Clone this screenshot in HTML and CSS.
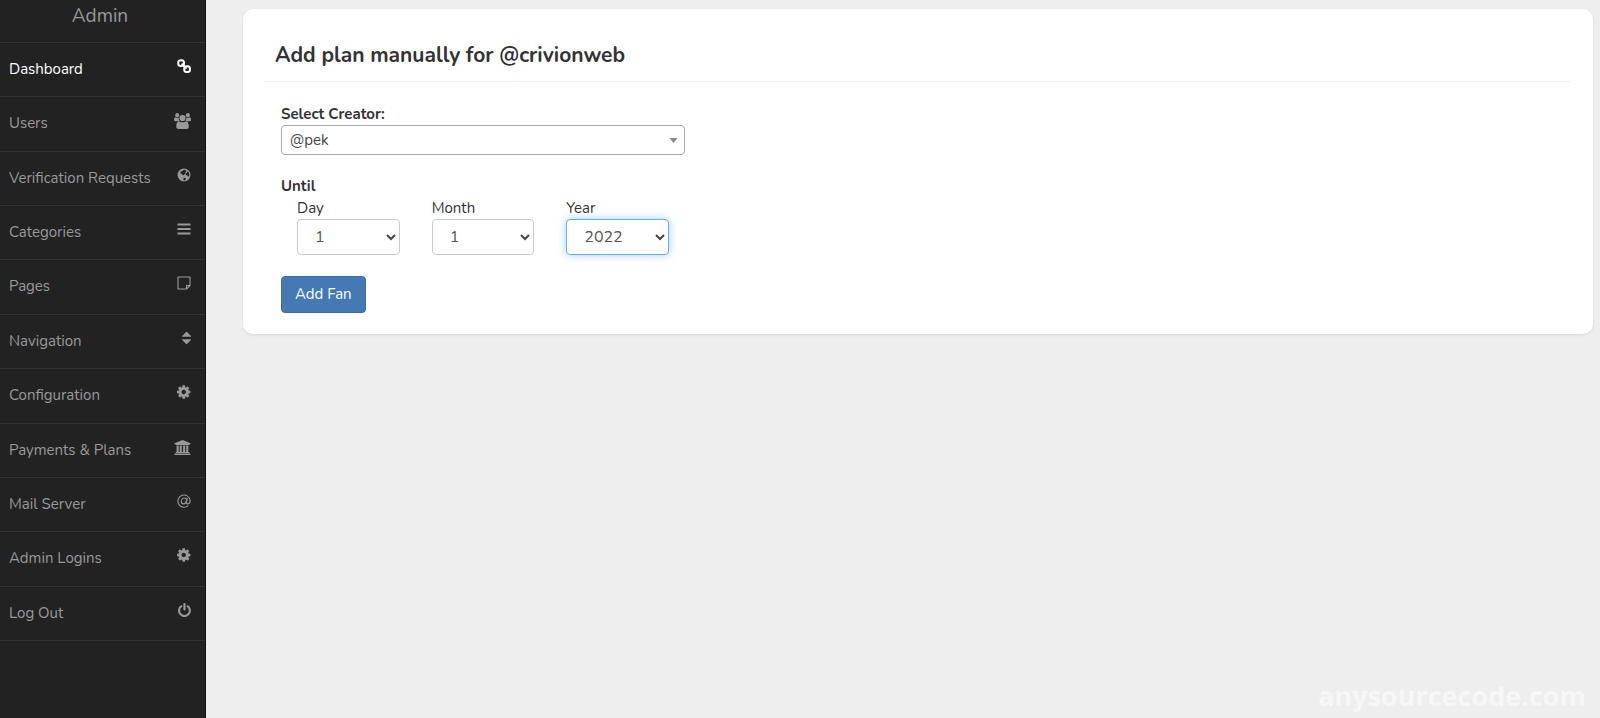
FILE: index.html
```
<!DOCTYPE html>
<html lang="en">
<head>
  <meta charset="UTF-8">
  <meta name="viewport" content="width=device-width, initial-scale=1.0">
  <title>Admin - Add plan manually</title>
  <link rel="stylesheet" href="styles.css">
</head>
<body>
  <div class="wrapper">
    <aside class="sidebar">
      <div class="sidebar-brand">Admin</div>
      <nav class="sidebar-nav">
        <a href="#" class="active">Dashboard
          <svg class="icon" viewBox="0 0 14 14"><g fill="none" stroke="currentColor" stroke-width="2"><rect x="1.200" y="1.200" width="5.800" height="5.800" rx="2.500"/><rect x="7.200" y="7.200" width="5.800" height="5.800" rx="2.500"/><path d="M4.600 4.600l5 5"/></g></svg>
        </a>
        <a href="#">Users
          <svg class="icon icon-wide" viewBox="0 0 16 15"><g fill="currentColor"><circle cx="3" cy="2" r="1.9"/><circle cx="13" cy="2" r="1.9"/><circle cx="8" cy="4.800" r="2.900"/><path d="M0 6.600q0-2.600 1.200-2.600q1.600.9 3.200.3q-.2 1.900 1 3.400h-3.700q-1.700 0-1.700-1.100zM16 6.600q0-2.600-1.200-2.600q-1.600.9-3.200.3q.2 1.900-1 3.400h3.700q1.700 0 1.700-1.100zM2.100 12.800q0-4.900 2.700-4.900q3.200 1.700 6.400 0q2.700 0 2.700 4.900q0 2.200-2.100 2.200h-7.600q-2.100 0-2.100-2.200z"/></g></svg>
        </a>
        <a href="#">Verification Requests
          <svg class="icon" viewBox="0 0 14 14"><path fill="currentColor" fill-rule="evenodd" d="M7 .5a6.500 6.500 0 1 1 0 13a6.500 6.500 0 1 1 0-13zM8.200 1.700l-1.800.2l-1 1l-1.600.5l-.5 1.500l.6.9l1.100.1l.6 1.200l1.500.2l.4-1.200l1.200-.8l-.4-1.200l1.300-.9zM10.800 3.200l-1 1.500l-1.200 1.200l.2 1.200l1.400.2l.5 1l1.200.2l.5-1.800l-.5-1.900zM6.700 9.400l1.500.6l.8 1l-1.200 1.400l-1.400-.3z"/></svg>
        </a>
        <a href="#">Categories
          <svg class="icon" viewBox="0 0 14 14"><path fill="currentColor" d="M.5 1.500h13v2H.5zM.5 6h13v2H.5zM.5 10.500h13v2H.5z"/></svg>
        </a>
        <a href="#">Pages
          <svg class="icon" viewBox="0 0 14 14"><path fill="none" stroke="currentColor" stroke-width="1.1" stroke-linejoin="round" d="M1 1h12v8.500l-3.500 3.500H1zM9.500 13V9.500H13"/></svg>
        </a>
        <a href="#">Navigation
          <svg class="icon" viewBox="384 112 1024 1568"><path fill="currentColor" d="M1408 1088q0 26-19 45l-448 448q-19 19-45 19t-45-19l-448-448q-19-19-19-45t19-45 45-19h896q26 0 45 19t19 45zm0-384q0 26-19 45t-45 19h-896q-26 0-45-19t-19-45 19-45l448-448q19-19 45-19t45 19l448 448q19 19 19 45z"/></svg>
        </a>
        <a href="#">Configuration
          <svg class="icon" viewBox="128 96 1600 1600"><path fill="currentColor" d="M1152 896q0-106-75-181t-181-75-181 75-75 181 75 181 181 75 181-75 75-181zm512-109v222q0 12-8 23t-20 13l-185 28q-19 54-39 91 35 50 107 138 10 12 10 25t-9 23q-27 37-99 108t-94 71q-12 0-26-9l-138-108q-44 23-91 38-16 136-29 186-7 28-36 28h-222q-14 0-24.500-8.500t-11.500-21.500l-28-184q-49-16-90-37l-141 107q-10 9-25 9-14 0-25-11-126-114-165-168-7-10-7-23 0-12 8-23 15-21 51-66.500t54-70.500q-27-50-41-99l-183-27q-13-2-21-12.500t-8-23.500v-222q0-12 8-23t19-13l186-28q14-46 39-92-40-57-107-138-10-12-10-24 0-10 9-23 26-36 98.500-107.500t94.500-71.500q13 0 26 10l138 107q44-23 91-38 16-136 29-186 7-28 36-28h222q14 0 24.500 8.500t11.500 21.500l28 184q49 16 90 37l142-107q9-9 24-9 13 0 25 10 129 119 165 170 7 8 7 22 0 12-8 23-15 21-51 66.500t-54 70.500q26 50 41 98l183 28q13 2 21 12.500t8 23.500z"/></svg>
        </a>
        <a href="#">Payments &amp; Plans
          <svg class="icon icon-wide" viewBox="0 0 17 16"><path fill="currentColor" d="M8.500 0l8 3.200v1h-1q0 .7-.6.7H2.100q-.6 0-.6-.7h-1v-1zM2.600 5.400h2.100v6.600h1V5.400h2.100v6.600h1.300V5.400h2.100v6.600h1V5.400h2.100v6.600h.5q.6 0 .6.700v.4H1.600v-.4q0-.7.6-.7h.4zM1.100 13.500h14.800q.6 0 .6.600v1H.5v-1q0-.6.6-.6z"/></svg>
        </a>
        <a href="#">Mail Server
          <svg class="icon" viewBox="0 0 14 14"><g fill="none" stroke="currentColor" stroke-width="1.100"><path d="M11.200 11.600A6.100 6.100 0 1 1 13.100 6.700c0 2-1.200 3.200-2.500 3.200c-1 0-1.400-.6-1.200-1.600l.9-4.500"/><path d="M9.500 6.200c-.3 2.100-1.500 3.700-3.100 3.700c-1.300 0-2.100-.9-2.100-2.300c0-1.900 1.400-3.600 3.200-3.600c1.300 0 2.200.9 2 2.200z"/></g></svg>
        </a>
        <a href="#">Admin Logins
          <svg class="icon" viewBox="128 96 1600 1600"><path fill="currentColor" d="M1152 896q0-106-75-181t-181-75-181 75-75 181 75 181 181 75 181-75 75-181zm512-109v222q0 12-8 23t-20 13l-185 28q-19 54-39 91 35 50 107 138 10 12 10 25t-9 23q-27 37-99 108t-94 71q-12 0-26-9l-138-108q-44 23-91 38-16 136-29 186-7 28-36 28h-222q-14 0-24.500-8.500t-11.500-21.500l-28-184q-49-16-90-37l-141 107q-10 9-25 9-14 0-25-11-126-114-165-168-7-10-7-23 0-12 8-23 15-21 51-66.500t54-70.500q-27-50-41-99l-183-27q-13-2-21-12.500t-8-23.500v-222q0-12 8-23t19-13l186-28q14-46 39-92-40-57-107-138-10-12-10-24 0-10 9-23 26-36 98.500-107.500t94.500-71.500q13 0 26 10l138 107q44-23 91-38 16-136 29-186 7-28 36-28h222q14 0 24.500 8.500t11.500 21.500l28 184q49 16 90 37l142-107q9-9 24-9 13 0 25 10 129 119 165 170 7 8 7 22 0 12-8 23-15 21-51 66.500t-54 70.500q26 50 41 98l183 28q13 2 21 12.500t8 23.500z"/></svg>
        </a>
        <a href="#">Log Out
          <svg class="icon" viewBox="128 0 1600 1664"><path fill="currentColor" d="M1664 896q0 156-61 298t-164 245-245 164-298 61-298-61-245-164-164-245-61-298q0-182 80.500-343t226.500-270q43-32 95.500-25t83.500 50q32 42 24.500 94.500t-49.500 84.500q-98 74-151.500 181t-53.500 228q0 104 40.500 198.500t109.500 163.500 163.500 109.500 198.500 40.500 198.500-40.500 163.500-109.500 109.500-163.500 40.500-198.500q0-121-53.500-228t-151.500-181q-42-32-49.500-84.500t24.500-94.500q31-43 84-50t95 25q146 109 226.500 270t80.500 343zm-640-768v640q0 52-38 90t-90 38-90-38-38-90v-640q0-52 38-90t90-38 90 38 38 90z"/></svg>
        </a>
      </nav>
    </aside>

    <main class="content">
      <section class="box">
        <h1 class="box-title">Add plan manually for @crivionweb</h1>
        <form class="plan-form">
          <label class="label-bold" for="creator">Select Creator:</label>
          <div class="select-wrap">
            <select id="creator" class="creator-select">
              <option>@pek</option>
            </select>
            <svg class="caret" viewBox="0 0 8 5"><path fill="#888" d="M0 0h8l-4 5z"/></svg>
          </div>

          <fieldset class="until">
            <legend class="label-bold">Until</legend>
            <div class="date-row">
              <div>
                <label for="day">Day</label>
                <div class="select-wrap">
                  <select id="day" class="form-control"><option>1</option></select>
                  <svg class="chevron" viewBox="0 0 10 7"><path d="M1 1l4 4 4-4"/></svg>
                </div>
              </div>
              <div>
                <label for="month">Month</label>
                <div class="select-wrap">
                  <select id="month" class="form-control"><option>1</option></select>
                  <svg class="chevron" viewBox="0 0 10 7"><path d="M1 1l4 4 4-4"/></svg>
                </div>
              </div>
              <div>
                <label for="year">Year</label>
                <div class="select-wrap">
                  <select id="year" class="form-control focused"><option>2022</option></select>
                  <svg class="chevron" viewBox="0 0 10 7"><path d="M1 1l4 4 4-4"/></svg>
                </div>
              </div>
            </div>
          </fieldset>

          <button type="submit" class="btn-primary">Add Fan</button>
        </form>
      </section>
    </main>
  </div>
  <div class="watermark">anysourcecode.com</div>
</body>
</html>
```
FILE: styles.css
```
* {
  box-sizing: border-box;
}
body {
  margin: 0;
  font-family: Nunito, Lato, sans-serif;
  font-size: 15px;
  line-height: 20px;
  color: #333;
  background: #eee;
}
.wrapper {
  display: flex;
  min-height: 100vh;
}

/* sidebar */
.sidebar {
  flex: 0 0 206px;
  background: #222;
  border-right: 1px solid #111;
}
.sidebar-brand {
  padding: 4px 5px 14px 0;
  font-size: 19px;
  line-height: 24px;
  text-align: center;
  color: #999;
}
.sidebar-nav {
  display: grid;
  grid-auto-rows: 1fr;
  min-height: 599px;
  border-bottom: 1px solid #333;
}
.sidebar-nav a {
  display: flex;
  justify-content: space-between;
  padding: 16px 14px 16px 9px;
  border-top: 1px solid #333;
  color: #999;
  text-decoration: none;
}
.sidebar-nav a.active {
  color: #fff;
}
.icon {
  height: 14px;
}
.icon-wide {
  height: 16px;
}

/* content */
.content {
  flex: 1;
  padding: 9px 7px 9px 37px;
}
.box {
  padding: 30px 21px 21px;
  background: #fff;
  border-radius: 10px;
  box-shadow: 0 1px 3px rgba(0, 0, 0, 0.1);
}
.box-title {
  margin: 0 0 22px;
  padding: 0 11px 10px;
  border-bottom: 1px solid #eee;
  font-size: 21px;
  line-height: 32px;
}
.plan-form {
  width: 33.33%;
  padding: 0 15px 0 17px;
}
label {
  display: block;
}
.label-bold {
  padding: 0;
  font-weight: bold;
}
.select-wrap {
  position: relative;
}
select {
  display: block;
  width: 100%;
  appearance: none;
  background: #fff;
  border: 1px solid #ccc;
  border-radius: 4px;
  font-family: inherit;
}
.creator-select {
  height: 30px;
  margin-top: 1px;
  padding: 0 8px;
  border-color: #aaa;
  color: #444;
  font-size: 15px;
}
.form-control {
  height: 36px;
  margin-top: 1px;
  padding: 0 17px;
  color: #555;
  font-size: 16px;
}
.form-control.focused {
  border-color: #66afe9;
  box-shadow: 0 0 8px rgba(102, 175, 233, 0.6);
}
.caret {
  position: absolute;
  top: 13px;
  right: 7px;
  width: 9px;
  height: 5px;
  pointer-events: none;
}
.chevron {
  position: absolute;
  top: 15px;
  right: 4px;
  width: 10px;
  height: 7px;
  fill: none;
  stroke: #444;
  stroke-width: 2;
  pointer-events: none;
}
.until {
  margin: 21px 0;
  padding: 0;
  border: 0;
}
.date-row {
  display: grid;
  grid-template-columns: repeat(3, 1fr);
  gap: 32px;
  padding: 2px 16px 0;
}
.btn-primary {
  padding: 8px 13px;
  background: #4479b3;
  border: 1px solid #3a6da5;
  border-radius: 4px;
  color: #fff;
  font-family: inherit;
  font-size: 15px;
  line-height: 19px;
}
.watermark {
  position: fixed;
  right: 14px;
  bottom: 4px;
  font-family: "Open Sans", sans-serif;
  font-size: 27px;
  font-weight: bold;
  line-height: 36px;
  color: #f7f7f7;
}
```
